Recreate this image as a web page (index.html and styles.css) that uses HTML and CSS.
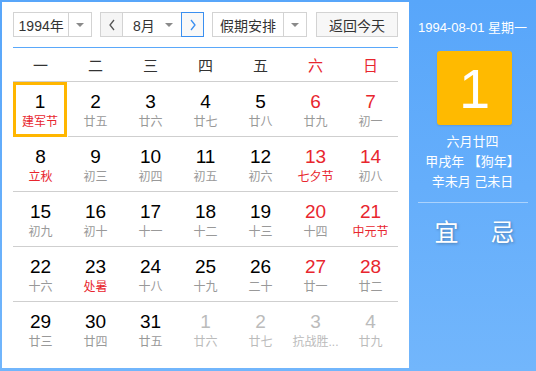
FILE: index.html
```html
<!DOCTYPE html>
<html lang="zh-CN">
<head>
    <meta charset="UTF-8">
    <title>万年历</title>
    <link rel="stylesheet" href="styles.css">
</head>
<body>
    <div class="calendar">
        <!-- Left: month grid -->
        <div class="main">
            <div class="toolbar">
                <div class="select year-select">
                    <span class="select-text">1994年</span>
                    <span class="select-arrow"></span>
                </div>
                <div class="month-group">
                    <button class="nav-btn prev">
                        <svg width="8" height="12" viewBox="0 0 8 12"><polyline points="6,1 2,6 6,11" fill="none" stroke="#555" stroke-width="1.3"/></svg>
                    </button>
                    <div class="month-text">8月</div>
                    <span class="select-arrow month-arrow"></span>
                    <button class="nav-btn next">
                        <svg width="8" height="12" viewBox="0 0 8 12"><polyline points="2,1 6,6 2,11" fill="none" stroke="#3a8ff0" stroke-width="1.3"/></svg>
                    </button>
                </div>
                <div class="select holiday-select">
                    <span class="select-text">假期安排</span>
                    <span class="select-arrow"></span>
                </div>
                <button class="today-btn">返回今天</button>
            </div>

            <div class="weekdays">
                <span>一</span><span>二</span><span>三</span><span>四</span><span>五</span>
                <span class="red">六</span><span class="red">日</span>
            </div>

            <div class="days">
                <div class="day today"><b>1</b><i class="red">建军节</i></div>
                <div class="day"><b>2</b><i>廿五</i></div>
                <div class="day"><b>3</b><i>廿六</i></div>
                <div class="day"><b>4</b><i>廿七</i></div>
                <div class="day"><b>5</b><i>廿八</i></div>
                <div class="day weekend"><b>6</b><i>廿九</i></div>
                <div class="day weekend"><b>7</b><i>初一</i></div>

                <div class="day"><b>8</b><i class="red">立秋</i></div>
                <div class="day"><b>9</b><i>初三</i></div>
                <div class="day"><b>10</b><i>初四</i></div>
                <div class="day"><b>11</b><i>初五</i></div>
                <div class="day"><b>12</b><i>初六</i></div>
                <div class="day weekend"><b>13</b><i class="red">七夕节</i></div>
                <div class="day weekend"><b>14</b><i>初八</i></div>

                <div class="day"><b>15</b><i>初九</i></div>
                <div class="day"><b>16</b><i>初十</i></div>
                <div class="day"><b>17</b><i>十一</i></div>
                <div class="day"><b>18</b><i>十二</i></div>
                <div class="day"><b>19</b><i>十三</i></div>
                <div class="day weekend"><b>20</b><i>十四</i></div>
                <div class="day weekend"><b>21</b><i class="red">中元节</i></div>

                <div class="day"><b>22</b><i>十六</i></div>
                <div class="day"><b>23</b><i class="red">处暑</i></div>
                <div class="day"><b>24</b><i>十八</i></div>
                <div class="day"><b>25</b><i>十九</i></div>
                <div class="day"><b>26</b><i>二十</i></div>
                <div class="day weekend"><b>27</b><i>廿一</i></div>
                <div class="day weekend"><b>28</b><i>廿二</i></div>

                <div class="day last"><b>29</b><i>廿三</i></div>
                <div class="day last"><b>30</b><i>廿四</i></div>
                <div class="day last"><b>31</b><i>廿五</i></div>
                <div class="day last other"><b>1</b><i>廿六</i></div>
                <div class="day last other"><b>2</b><i>廿七</i></div>
                <div class="day last other"><b>3</b><i>抗战胜...</i></div>
                <div class="day last other"><b>4</b><i>廿九</i></div>
            </div>
        </div>

        <!-- Right: selected day detail -->
        <div class="side">
            <div class="side-date">1994-08-01 星期一</div>
            <div class="big-day">1</div>
            <div class="lunar">
                <p>六月廿四</p>
                <p>甲戌年 【狗年】</p>
                <p>辛未月 己未日</p>
            </div>
            <div class="yiji">
                <span>宜</span><span>忌</span>
            </div>
        </div>
    </div>
</body>
</html>
```

FILE: styles.css
```css
* {
    box-sizing: border-box;
}
body {
    margin: 0;
    font-family: "Liberation Sans", "Noto Sans CJK SC", sans-serif;
    color: #333;
}
.calendar {
    display: flex;
    width: 536px;
    height: 371px;
    background: linear-gradient(#58a6fa, #72b6fc);
}
.main {
    width: 407px;
    margin: 2px 0 3px 2px;
    padding: 10px 11px 0 11px;
    background: #fff;
}
.toolbar {
    display: flex;
    height: 25px;
}
.select {
    display: flex;
    height: 25px;
    border: 1px solid #d3d3d3;
    background: #fff;
    font-size: 14px;
}
.select-text {
    display: flex;
    align-items: center;
    justify-content: center;
    border-right: 1px solid #d3d3d3;
}
.select-arrow {
    position: relative;
    width: 22px;
}
.select-arrow::after {
    content: "";
    position: absolute;
    left: 7px;
    top: 10px;
    border-left: 4px solid transparent;
    border-right: 4px solid transparent;
    border-top: 4px solid #8a8a8a;
}
.year-select {
    width: 79px;
}
.year-select .select-text {
    width: 56px;
}
.month-group {
    display: flex;
    width: 104px;
    height: 25px;
    margin-left: 8px;
    border: 1px solid #d3d3d3;
    font-size: 14px;
}
.nav-btn {
    display: flex;
    align-items: center;
    justify-content: center;
    width: 22px;
    height: 23px;
    padding: 0;
    border: none;
    background: #f5f5f5;
}
.prev {
    border-right: 1px solid #d3d3d3;
}
.next {
    width: 23px;
    height: 25px;
    margin: -1px -1px 0 0;
    border: 1px solid #3a8ff0;
    background: #f8f8f8;
}
.month-text {
    display: flex;
    align-items: center;
    padding-left: 10px;
    width: 37px;
}
.month-arrow {
    width: 21px;
}
.month-arrow::after {
    left: 5px;
}
.holiday-select {
    width: 95px;
    margin-left: 8px;
}
.holiday-select .select-text {
    width: 71px;
}
.today-btn {
    width: 82px;
    height: 25px;
    margin-left: 9px;
    padding: 0;
    border: 1px solid #d3d3d3;
    background: #f7f7f7;
    color: #333;
    font-family: inherit;
    font-size: 14px;
}
.weekdays {
    display: grid;
    grid-template-columns: repeat(7, 55px);
    height: 35px;
    margin-top: 10px;
    border-top: 1px solid #5aa8fa;
    border-bottom: 1px solid #cfcfcf;
    font-size: 15px;
    color: #333;
}
.weekdays span {
    display: flex;
    align-items: center;
    justify-content: center;
}
.days {
    display: grid;
    grid-template-columns: repeat(7, 55px);
    grid-auto-rows: 55px;
}
.day {
    display: flex;
    flex-direction: column;
    align-items: center;
    padding-top: 10px;
    border-bottom: 1px solid #cfcfcf;
}
.day.last {
    border-bottom: none;
}
.day b {
    font-weight: normal;
    font-size: 19px;
    line-height: 20px;
    color: #000;
}
.day i {
    font-style: normal;
    font-size: 12px;
    line-height: 16px;
    margin-top: 2px;
    color: #999;
    white-space: nowrap;
}
.day.weekend b {
    color: #e8262e;
}
.day.other b,
.day.other i {
    color: #bbb;
}
.day.today {
    width: 54px;
    padding-top: 7px;
    border: 3px solid #ffb600;
}
.day.today i {
    margin-top: 2px;
}
.red,
.day i.red {
    color: #e8262e;
}
.side {
    flex: 1;
    display: flex;
    flex-direction: column;
    align-items: center;
    color: #fff;
}
.side-date {
    margin-top: 17px;
    font-size: 13px;
}
.big-day {
    display: flex;
    align-items: center;
    justify-content: center;
    width: 75px;
    height: 74px;
    margin-top: 15px;
    margin-left: 4px;
    border-radius: 3px;
    background: #ffba00;
    font-size: 56px;
    box-shadow: 0 1px 2px rgba(0,0,0,0.1);
}
.lunar {
    width: 110px;
    margin-top: 7px;
    padding-bottom: 10px;
    border-bottom: 1px solid rgba(255,255,255,0.45);
    text-align: center;
    font-size: 13px;
}
.lunar p {
    margin: 0;
    line-height: 20px;
}
.yiji {
    display: flex;
    gap: 32px;
    margin-top: 10px;
    margin-left: 4px;
    font-size: 24px;
    text-shadow: 1px 1px 3px rgba(0,0,0,0.3);
}
```
